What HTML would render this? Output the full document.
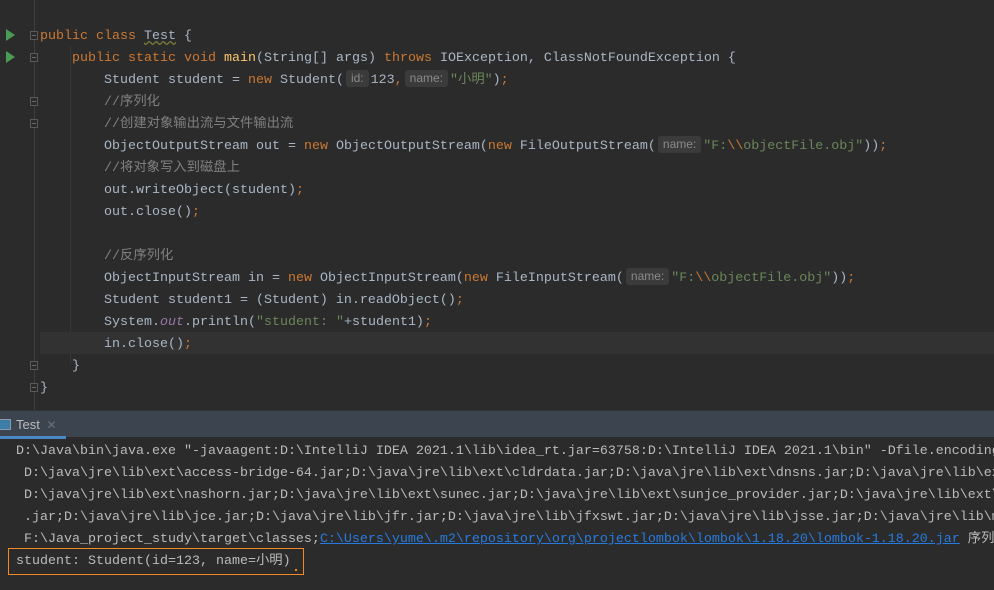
<!DOCTYPE html>
<html><head><meta charset="utf-8"><style>
body{margin:0;width:994px;height:590px;background:#2b2b2b;overflow:hidden;position:relative;font-family:"Liberation Mono","Noto Sans CJK SC",monospace;font-size:13.33px}
.wrap{position:absolute;left:0;top:0;width:994px;height:590px;overflow:hidden}
.ln{position:absolute;left:40px;right:0;overflow:hidden;height:22px;line-height:22px;white-space:pre;color:#a9b7c6}
.k{color:#cc7832}.s{color:#6a8759}.c{color:#808080}.m{color:#ffc66d}.o{color:#9876aa;font-style:italic}
.h{display:inline-block;background:#3b3b3b;color:#8a8a8a;font-family:"Liberation Sans",sans-serif;font-size:12px;line-height:17px;padding:0 5px;border-radius:3px;margin:0 2px;vertical-align:1px}
.cl{position:absolute;left:16px;right:0;overflow:hidden;height:22px;line-height:22px;white-space:pre;color:#bbbbbb}
.run{position:absolute;left:6px;width:0;height:0;border-left:9px solid #499c54;border-top:6px solid transparent;border-bottom:6px solid transparent}
.fold{position:absolute;left:30px;width:8px;height:9px;border:1px solid #5a5a5a;background:#2b2b2b;box-sizing:border-box}
.fold:after{content:"";position:absolute;left:1px;top:3px;width:4px;height:1px;background:#6a6a6a}
a{color:#287bde;text-decoration:underline}
</style></head><body><div class="wrap">
<div style="position:absolute;left:34px;top:0;width:1px;height:410px;background:#3e3e3e"></div>
<div style="position:absolute;left:70px;top:46px;width:1px;height:318px;background:#373737"></div>
<div style="position:absolute;left:40px;top:332px;width:954px;height:22px;background:#323232"></div>
<div class="run" style="top:29px"></div><div class="run" style="top:51px"></div>
<div class="fold" style="top:31px"></div><div class="fold" style="top:53px"></div>
<div class="fold" style="top:97px"></div><div class="fold" style="top:119px"></div>
<div class="fold" style="top:361px"></div><div class="fold" style="top:383px"></div>
<div class="ln" style="top:26px"><span class="k">public class </span><span style="text-decoration:underline wavy #7a7a3a">Test</span> {</div>
<div class="ln" style="top:48px">    <span class="k">public static void </span><span class="m">main</span>(String[] args) <span class="k">throws </span>IOException, ClassNotFoundException {</div>
<div class="ln" style="top:70px">        Student student = <span class="k">new </span>Student(<span class="h">id:</span>123<span class="k">,</span><span class="h">name:</span><span class="s">"小明"</span>)<span class="k">;</span></div>
<div class="ln" style="top:92px">        <span class="c">//序列化</span></div>
<div class="ln" style="top:114px">        <span class="c">//创建对象输出流与文件输出流</span></div>
<div class="ln" style="top:136px">        ObjectOutputStream out = <span class="k">new </span>ObjectOutputStream(<span class="k">new </span>FileOutputStream(<span class="h">name:</span><span class="s">"F:<span class="k">\\</span>objectFile.obj"</span>))<span class="k">;</span></div>
<div class="ln" style="top:158px">        <span class="c">//将对象写入到磁盘上</span></div>
<div class="ln" style="top:180px">        out.writeObject(student)<span class="k">;</span></div>
<div class="ln" style="top:202px">        out.close()<span class="k">;</span></div>
<div class="ln" style="top:246px">        <span class="c">//反序列化</span></div>
<div class="ln" style="top:268px">        ObjectInputStream in = <span class="k">new </span>ObjectInputStream(<span class="k">new </span>FileInputStream(<span class="h">name:</span><span class="s">"F:<span class="k">\\</span>objectFile.obj"</span>))<span class="k">;</span></div>
<div class="ln" style="top:290px">        Student student1 = (Student) in.readObject()<span class="k">;</span></div>
<div class="ln" style="top:312px">        System.<span class="o">out</span>.println(<span class="s">"student: "</span>+student1)<span class="k">;</span></div>
<div class="ln" style="top:334px">        in.close()<span class="k">;</span></div>
<div class="ln" style="top:356px">    }</div>
<div class="ln" style="top:378px">}</div>
<div style="position:absolute;left:0;top:410px;width:994px;height:1px;background:#323232"></div>
<div style="position:absolute;left:0;top:411px;width:994px;height:26px;background:#3c4450"></div>
<div style="position:absolute;left:-2px;top:419px;width:11px;height:9px;border:1px solid #8a9aa8;background:#3d7da8"></div>
<div style="position:absolute;left:16px;top:412px;height:26px;line-height:26px;color:#bbbbbb;font-family:'Liberation Sans',sans-serif;font-size:13px">Test <span style="color:#6d7278;font-size:12px;margin-left:3px">✕</span></div>
<div style="position:absolute;left:0;top:436px;width:66px;height:3px;background:#4a88c7"></div>
<div class="cl" style="top:441px">D:\Java\bin\java.exe "-javaagent:D:\IntelliJ IDEA 2021.1\lib\idea_rt.jar=63758:D:\IntelliJ IDEA 2021.1\bin" -Dfile.encoding=UTF-8</div>
<div class="cl" style="top:463px"> D:\java\jre\lib\ext\access-bridge-64.jar;D:\java\jre\lib\ext\cldrdata.jar;D:\java\jre\lib\ext\dnsns.jar;D:\java\jre\lib\ext\</div>
<div class="cl" style="top:485px"> D:\java\jre\lib\ext\nashorn.jar;D:\java\jre\lib\ext\sunec.jar;D:\java\jre\lib\ext\sunjce_provider.jar;D:\java\jre\lib\ext\</div>
<div class="cl" style="top:507px"> .jar;D:\java\jre\lib\jce.jar;D:\java\jre\lib\jfr.jar;D:\java\jre\lib\jfxswt.jar;D:\java\jre\lib\jsse.jar;D:\java\jre\lib\m</div>
<div class="cl" style="top:529px"> F:\Java_project_study\target\classes;<a>C:\Users\yume\.m2\repository\org\projectlombok\lombok\1.18.20\lombok-1.18.20.jar</a> 序列化</div>
<div class="cl" style="top:551px">student: Student(id=123, name=小明)</div>
<div style="position:absolute;left:8px;top:548px;width:296px;height:27px;border:1px solid #f28a28;box-sizing:border-box"></div>
<div style="position:absolute;left:295px;top:569px;width:2px;height:2px;background:#f28a28"></div>
</div></body></html>
